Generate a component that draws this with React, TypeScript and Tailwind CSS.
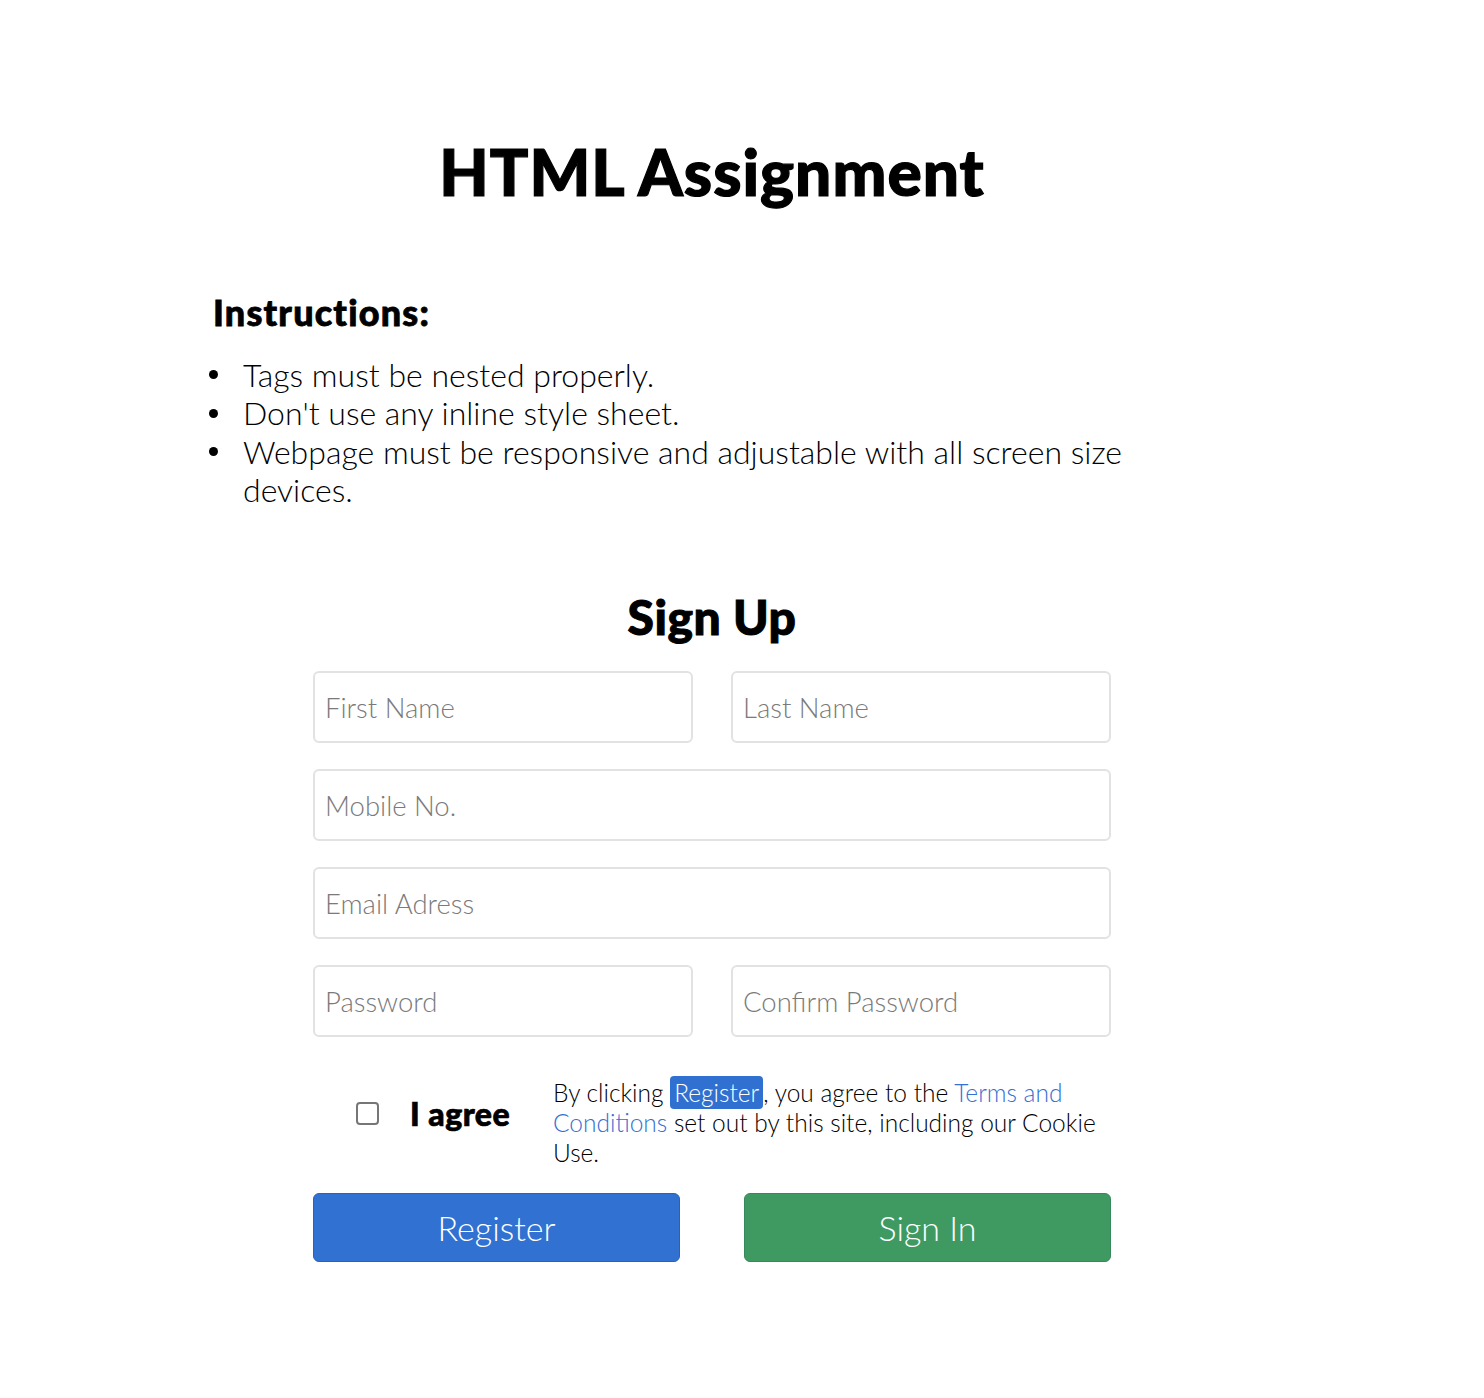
import React from 'react';

const inputCls =
  'h-[72px] w-full rounded-md border-2 border-[#e2e2e2] bg-white px-[10px] text-[27.5px] font-light text-gray-800 placeholder:text-[#7a7a7a] outline-none';

const items = [
  'Tags must be nested properly.',
  "Don't use any inline style sheet.",
  'Webpage must be responsive and adjustable with all screen size devices.',
];

const App: React.FC = () => {
  return (
    <div className="min-h-[1398px] bg-white text-black font-['Lato','Open_Sans',sans-serif]">
      <div className="ml-[213px] w-[998px] pt-[134px]">
        {/* Title */}
        <h1 className="text-center text-[64px] font-black leading-[1.2] tracking-[1px] [-webkit-text-stroke:1.2px_black]">
          HTML Assignment
        </h1>

        {/* Instructions */}
        <h2 className="mt-[80px] text-[36px] font-black leading-[1.2] tracking-[1.2px] [-webkit-text-stroke:0.8px_black]">
          Instructions:
        </h2>
        <ul className="mt-[22px] text-[32px] font-light leading-[1.2]">
          {items.map((item) => (
            <li key={item} className="flex">
              <span className="flex h-[38px] w-[30px] shrink-0 items-center">
                <span className="-ml-[4px] h-[9px] w-[9px] rounded-full bg-black" />
              </span>
              <span>{item}</span>
            </li>
          ))}
        </ul>

        {/* Sign up form */}
        <form className="mx-auto mt-[78px] w-[798px]" onSubmit={(e) => e.preventDefault()}>
          <h2 className="text-center text-[48px] font-black leading-[1.2] tracking-[0.5px] [-webkit-text-stroke:1px_black]">
            Sign Up
          </h2>

          <div className="mt-[26px] flex flex-col gap-[26px]">
            <div className="flex gap-[38px]">
              <input className={inputCls} placeholder="First Name" />
              <input className={inputCls} placeholder="Last Name" />
            </div>
            <input className={inputCls} placeholder="Mobile No." />
            <input className={inputCls} placeholder="Email Adress" />
            <div className="flex gap-[38px]">
              <input className={inputCls} type="password" placeholder="Password" />
              <input className={inputCls} type="password" placeholder="Confirm Password" />
            </div>
          </div>

          <div className="mt-[41px] flex items-center">
            <div className="-mt-[19px] flex w-[240px] items-center pl-[43px]">
              <input
                type="checkbox"
                className="h-[23px] w-[23px] appearance-none rounded-[4px] border-2 border-[#767676] bg-white"
              />
              <span className="ml-[31px] text-[32px] font-black leading-none tracking-[0.5px] [-webkit-text-stroke:0.7px_black]">
                I agree
              </span>
            </div>
            <p className="w-[558px] text-[24.5px] font-light leading-[30px]">
              By clicking{' '}
              <span className="rounded-[4px] bg-[#3070d0] px-[4px] py-[2px] text-white">Register</span>, you
              agree to the <a className="text-[#3470d2]">Terms and Conditions</a> set out by this site, including
              our Cookie Use.
            </p>
          </div>

          <div className="mt-[25px] flex justify-between">
            <button
              type="submit"
              className="h-[69px] w-[367px] rounded-md border border-[#2a62b8] bg-[#3171d1] text-[34px] font-light text-white"
            >
              Register
            </button>
            <button
              type="button"
              className="h-[69px] w-[367px] rounded-md border border-[#37895a] bg-[#3f9a62] text-[34px] font-light text-white"
            >
              Sign In
            </button>
          </div>
        </form>
      </div>
    </div>
  );
};

export default App;
